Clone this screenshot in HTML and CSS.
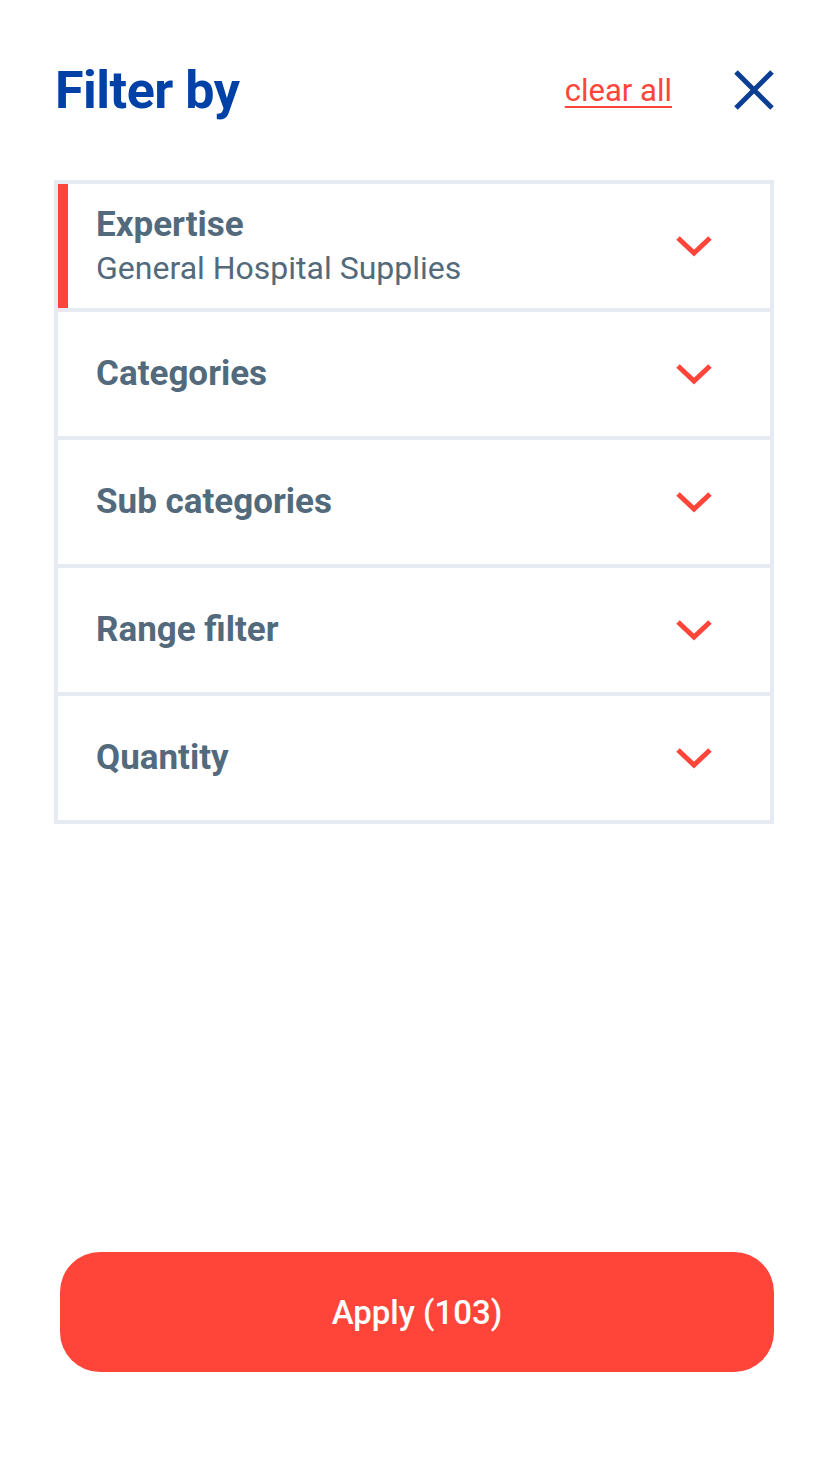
FILE: index.html
```html
<!DOCTYPE html>
<html lang="en">
<head>
<meta charset="utf-8">
<title>Filter by</title>
<link rel="stylesheet" href="styles.css">
</head>
<body>
<div class="page">
  <header class="header">
    <h1 class="title">Filter by</h1>
    <a class="clear" href="#">clear all</a>
    <button class="close" aria-label="Close">
      <svg width="40" height="40" viewBox="0 0 40 40"><path d="M2 2 L38 38 M38 2 L2 38" stroke="#0b3f94" stroke-width="5" fill="none"/></svg>
    </button>
  </header>

  <div class="filters">
    <div class="row active">
      <div class="label">
        <div class="name">Expertise</div>
        <div class="value">General Hospital Supplies</div>
      </div>
      <svg class="chev" width="36" height="22" viewBox="0 0 36 22"><polyline points="2,3 18,18 34,3" fill="none" stroke="#ff4539" stroke-width="5"/></svg>
    </div>
    <div class="row">
      <div class="label"><div class="name">Categories</div></div>
      <svg class="chev" width="36" height="22" viewBox="0 0 36 22"><polyline points="2,3 18,18 34,3" fill="none" stroke="#ff4539" stroke-width="5"/></svg>
    </div>
    <div class="row">
      <div class="label"><div class="name">Sub categories</div></div>
      <svg class="chev" width="36" height="22" viewBox="0 0 36 22"><polyline points="2,3 18,18 34,3" fill="none" stroke="#ff4539" stroke-width="5"/></svg>
    </div>
    <div class="row">
      <div class="label"><div class="name">Range filter</div></div>
      <svg class="chev" width="36" height="22" viewBox="0 0 36 22"><polyline points="2,3 18,18 34,3" fill="none" stroke="#ff4539" stroke-width="5"/></svg>
    </div>
    <div class="row">
      <div class="label"><div class="name">Quantity</div></div>
      <svg class="chev" width="36" height="22" viewBox="0 0 36 22"><polyline points="2,3 18,18 34,3" fill="none" stroke="#ff4539" stroke-width="5"/></svg>
    </div>
  </div>

  <button class="apply">Apply (103)</button>
</div>
</body>
</html>
```

FILE: styles.css
```css
* { box-sizing: border-box; }
html, body { margin: 0; padding: 0; background: #fff; }
body { font-family: Roboto, "Liberation Sans", sans-serif; }

.page {
  min-height: 1472px;
  display: flex;
  flex-direction: column;
  padding: 50px 54px 100px 54px;
}

.header {
  height: 80px;
  display: flex;
  align-items: center;
}
.title {
  margin: 0 0 0 1px;
  font-size: 52px;
  font-weight: 700;
  color: #0041a8;
  letter-spacing: -0.5px;
  flex: 1;
}
.clear {
  font-size: 31px;
  color: #ff4539;
  text-decoration: underline;
  text-decoration-thickness: 2px;
  text-underline-offset: 5px;
  margin-right: 62px;
  margin-top: 0;
}
.close {
  border: 0;
  background: none;
  padding: 0;
  width: 40px;
  height: 40px;
  display: flex;
}

.filters {
  margin-top: 50px;
  border: 4px solid #e6eaf1;
  border-bottom: 0;
}
.row {
  height: 128px;
  border-bottom: 4px solid #e6eaf1;
  display: flex;
  align-items: center;
  padding: 0 58px 0 38px;
}
.row.active {
  box-shadow: inset 10px 0 0 #ff4539;
}
.label { flex: 1; }
.name {
  font-size: 35px;
  line-height: 40px;
  font-weight: 700;
  color: #526a7c;
}
.value {
  font-size: 32px;
  line-height: 40px;
  font-weight: 400;
  color: #526a7c;
  margin-top: 3px;
}
.chev { display: block; }

.apply {
  margin-top: auto;
  margin-left: 6px;
  height: 120px;
  border: 0;
  border-radius: 40px;
  background: #ff4539;
  color: #fff;
  font-family: Roboto, "Liberation Sans", sans-serif;
  font-size: 33px;
  font-weight: 500;
}
```
